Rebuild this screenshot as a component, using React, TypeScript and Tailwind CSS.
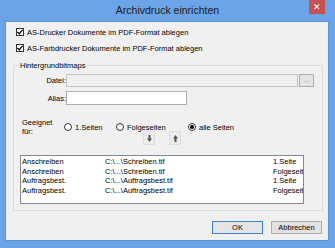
import React from "react"

const rows = [
  { name: "Anschreiben", file: "C:\\...\\Schreiben.tif", page: "1.Seite" },
  { name: "Anschreiben", file: "C:\\...\\Schreiben.tif", page: "Folgeseiten" },
  { name: "Auftragsbest.", file: "C:\\...\\Auftragsbest.tif", page: "1.Seite" },
  { name: "Auftragsbest.", file: "C:\\...\\Auftragsbest.tif", page: "Folgeseiten" },
]

function Check({ label }: { label: string }) {
  return (
    <div className="flex items-center h-[8px] gap-[3px]">
      <div className="w-[8px] h-[8px] bg-white border border-[#333] flex items-center justify-center">
        <svg width="6" height="6" viewBox="0 0 6 6">
          <polyline points="0.5,3 2.2,4.8 5.5,0.8" fill="none" stroke="#000" strokeWidth="1.3" />
        </svg>
      </div>
      <span>{label}</span>
    </div>
  )
}

function Radio({ label, checked, width }: { label: string; checked?: boolean; width: string }) {
  return (
    <div className={`flex items-center gap-[3px] ${width}`}>
      <div className="w-[8px] h-[8px] rounded-full bg-white border border-[#333] flex items-center justify-center">
        {checked && <div className="w-[4px] h-[4px] rounded-full bg-black" />}
      </div>
      <span>{label}</span>
    </div>
  )
}

function ArrowBtn({ up }: { up?: boolean }) {
  return (
    <div className="w-[12px] h-[14px] border border-[#dcdcdc] bg-[#ececec] flex items-center justify-center">
      <svg width="5" height="7" viewBox="0 0 5 7" className={up ? "rotate-180" : ""}>
        <rect x="1.5" y="0" width="2" height="4" fill="#555" />
        <polygon points="0,3.5 5,3.5 2.5,7" fill="#555" />
      </svg>
    </div>
  )
}

export default function App() {
  return (
    <div
      className="w-[335px] h-[248px] bg-[#6ba5e7] flex flex-col text-[7.5px] leading-[9px] text-black"
      style={{ fontFamily: '"Liberation Sans", Arial, sans-serif' }}
    >
      {/* title bar */}
      <div className="h-[21px] grid grid-cols-[1fr_auto_1fr] items-start">
        <div />
        <div className="text-[10.5px] leading-[21px] text-[#1a1a1a]">Archivdruck einrichten</div>
        <div className="flex justify-end pr-[10px]">
          <div className="w-[16px] h-[14px] bg-[#c75050] flex items-center justify-center text-white text-[9px] leading-none">
            ✕
          </div>
        </div>
      </div>

      {/* client */}
      <div className="ml-[5px] mr-[6px] h-[220px] bg-[#f0f0f0] border border-[#5c93d6] flex flex-col">
        <div className="pl-[10px] pt-[6px] flex flex-col gap-[8px]">
          <Check label="AS-Drucker Dokumente im PDF-Format ablegen" />
          <Check label="AS-Farbdrucker Dokumente im PDF-Format ablegen" />
        </div>

        {/* group box */}
        <div className="relative ml-[7px] mt-[13px] w-[310px] h-[146px] border border-[#dcdcdc] flex flex-col">
          <span className="absolute -top-[5px] left-[5px] px-[1px] bg-[#f0f0f0]">Hintergrundbitmaps</span>

          <div className="mt-[8px] flex items-center h-[13px]">
            <span className="w-[52px] text-right">Datei:</span>
            <div className="w-[232px] h-[13px] border border-[#c4c4c4] bg-[#f0f0f0]" />
            <div className="ml-[1px] w-[15px] h-[13px] border border-[#adadad] bg-[#e4e4e4] flex items-center justify-center text-[#555] text-[6px]">
              ...
            </div>
          </div>

          <div className="mt-[4px] flex items-center h-[14px]">
            <span className="w-[52px] text-right">Alias:</span>
            <div className="w-[121px] h-[14px] border border-[#abadb3] bg-white" />
          </div>

          <div className="mt-[13px] flex">
            <div className="ml-[8px] w-[42px] leading-[9px]">
              Geeignet
              <br />
              für:
            </div>
            <div className="flex flex-col">
              <div className="mt-[5px] flex items-center h-[8px]">
                <Radio label="1.Seiten" width="w-[52px]" />
                <Radio label="Folgeseiten" width="w-[72px]" />
                <Radio label="alle Seiten" checked width="w-[60px]" />
              </div>
              <div className="ml-[79px] flex gap-[14px]">
                <ArrowBtn />
                <ArrowBtn up />
              </div>
            </div>
          </div>

          <div className="ml-[6px] mt-[10px] w-[284px] h-[49px] border border-[#828790] bg-white pt-[1px] overflow-hidden">
            {rows.map((r, i) => (
              <div key={i} className="flex h-[9.5px] items-center">
                <span className="pl-[1px] w-[84px]">{r.name}</span>
                <span className="w-[168px]">{r.file}</span>
                <span className="w-[30px] whitespace-nowrap overflow-hidden">{r.page}</span>
              </div>
            ))}
          </div>
        </div>

        <div className="mt-[10px] flex justify-end gap-[8px] pr-[6px]">
          <div className="w-[51px] h-[13px] border border-[#3c7fd6] bg-[#e5e5e5] flex items-center justify-center">OK</div>
          <div className="w-[51px] h-[13px] border border-[#adadad] bg-[#e1e1e1] flex items-center justify-center">Abbrechen</div>
        </div>
      </div>
    </div>
  )
}
